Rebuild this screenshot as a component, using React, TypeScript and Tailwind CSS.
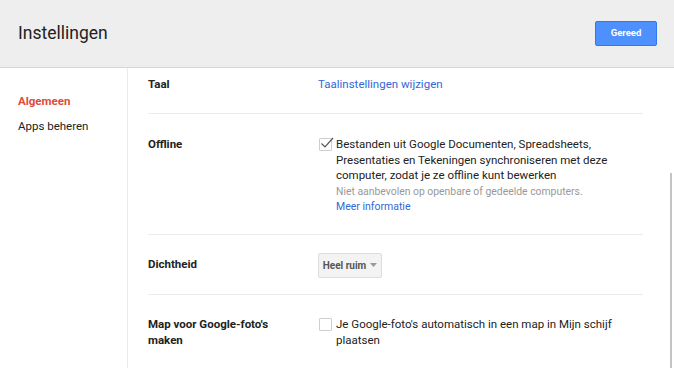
const font = { fontFamily: 'Roboto, Arial, sans-serif' }

function Checkbox({ checked }: { checked?: boolean }) {
  return (
    <div className="relative mt-[1px] h-[13px] w-[13px] shrink-0 border border-[#cfcfcf] bg-white rounded-[1px]">
      {checked && (
        <svg className="absolute -left-[1px] -top-[3px]" width="16" height="14" viewBox="0 0 16 14">
          <path d="M2.5 7.5 L6 11 L14 2" fill="none" stroke="#555" strokeWidth="1.2" />
        </svg>
      )}
    </div>
  )
}

export default function App() {
  return (
    <main className="h-[368px] w-[674px] overflow-hidden bg-white text-[#222]" style={font}>
      {/* Header */}
      <header className="flex h-[68px] items-center justify-between border-b border-[#d6d6d6] bg-[#eeeeee] pl-[18px] pr-[17px]">
        <h1 className="text-[17.5px] text-[#222]">Instellingen</h1>
        <button className="h-[25px] w-[62px] rounded-[2px] border border-[#3079ed] bg-[#4d90fe] text-[9.5px] font-bold text-white">
          Gereed
        </button>
      </header>

      <div className="flex h-[300px]">
        {/* Sidebar */}
        <nav className="w-[128px] shrink-0 border-r border-[#ebebeb] pl-[18px] pt-[25px] text-[11.5px]">
          <div className="h-[25px] font-bold text-[#dd4b39]">Algemeen</div>
          <div className="text-[#222]">Apps beheren</div>
        </nav>

        {/* Content */}
        <section className="relative flex-1 pl-[20px] pr-[31px] text-[11.5px]">
          <div className="flex h-[46px] border-b border-[#ebebeb] pt-[8px]">
            <div className="w-[170px] font-bold">Taal</div>
            <div className="text-[#3367d6]">Taalinstellingen wijzigen</div>
          </div>

          <div className="flex h-[121px] border-b border-[#ebebeb] pt-[23px]">
            <div className="w-[171px] font-bold leading-[15.5px]">Offline</div>
            <div className="flex gap-[4px]">
              <Checkbox checked />
              <div className="leading-[15.5px]">
                <div>
                  Bestanden uit Google Documenten, Spreadsheets,
                  <br />
                  Presentaties en Tekeningen synchroniseren met deze
                  <br />
                  computer, zodat je ze offline kunt bewerken
                </div>
                <div className="text-[10.4px] text-[#999]">Niet aanbevolen op openbare of gedeelde computers.</div>
                <div className="text-[10.5px] text-[#3367d6]">Meer informatie</div>
              </div>
            </div>
          </div>

          <div className="flex h-[60px] items-center border-b border-[#ebebeb] pt-[1px]">
            <div className="w-[170px] font-bold">Dichtheid</div>
            <button className="flex h-[25px] w-[64px] items-center justify-center gap-[4px] rounded-[2px] border border-[#dcdcdc] bg-[#f3f3f3] text-[10px] font-bold text-[#555]">
              Heel ruim
              <svg width="7" height="4" viewBox="0 0 7 4">
                <path d="M0 0 L7 0 L3.5 4 Z" fill="#999" />
              </svg>
            </button>
          </div>

          <div className="flex pt-[22px] leading-[15.5px]">
            <div className="w-[171px] font-bold">
              Map voor Google-foto's
              <br />
              maken
            </div>
            <div className="flex gap-[4px]">
              <Checkbox />
              <div>
                Je Google-foto's automatisch in een map in Mijn schijf
                <br />
                plaatsen
              </div>
            </div>
          </div>

          {/* scrollbar */}
          <div className="absolute right-[2px] top-[105px] h-[200px] w-[2px] bg-[#c4c4c4]" />
        </section>
      </div>
    </main>
  )
}
